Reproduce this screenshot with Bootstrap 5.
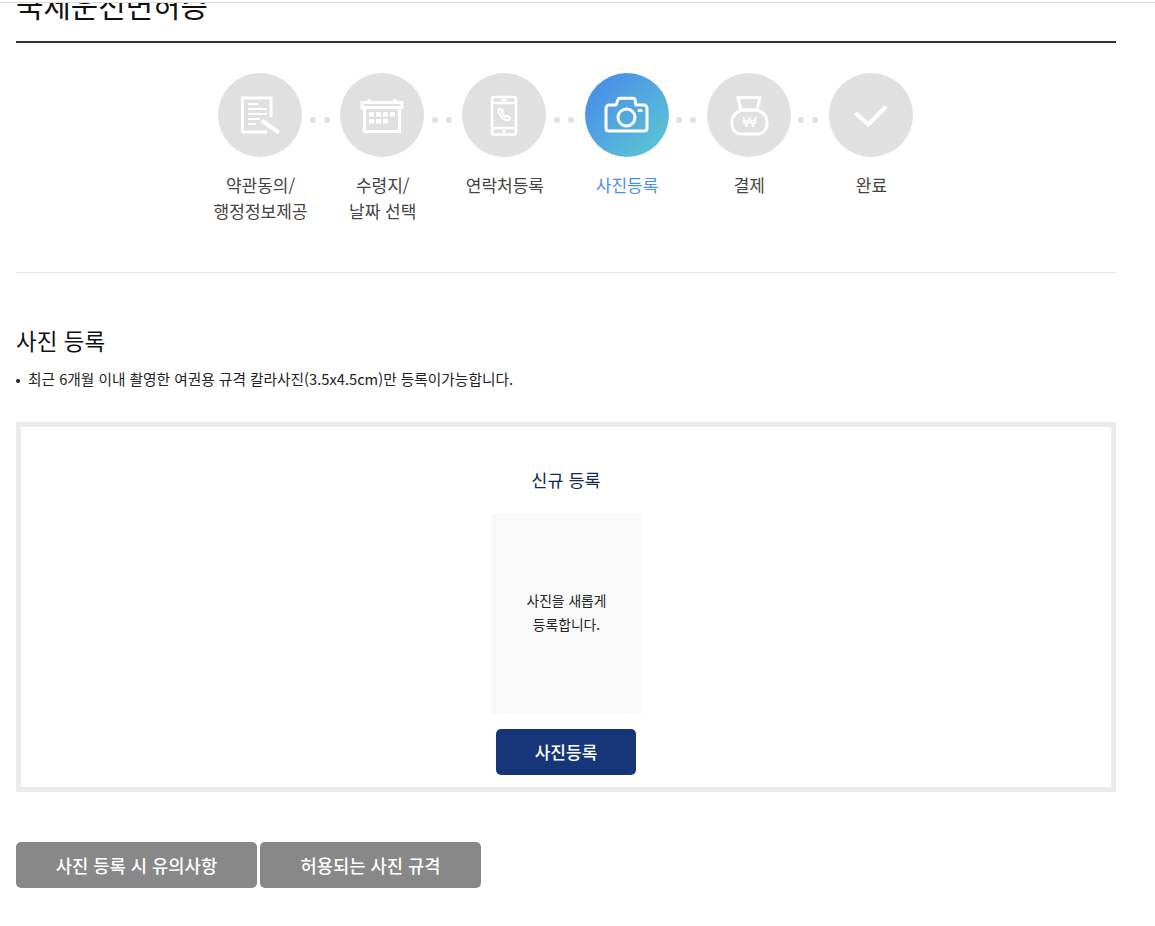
<!DOCTYPE html>
<html lang="ko">
<head>
<meta charset="utf-8">
<title>국제운전면허증</title>
<link href="https://cdn.jsdelivr.net/npm/bootstrap@5.3.0/dist/css/bootstrap.min.css" rel="stylesheet">
<style>
html,body{height:926px;overflow:hidden}
body{font-family:"Noto Sans CJK KR","Noto Sans",sans-serif;color:#222;background:#fff}
.topline{height:3px;border-bottom:1px solid #ddd}
.pagewrap{width:1100px;margin-left:16px}
.titlebar{height:40px;overflow:hidden;border-bottom:2px solid #333}
.titletext{font-size:29.800px;line-height:36px;margin:-17px 0 0;font-weight:400;color:#111;font-family:"Noto Sans CJK KR",sans-serif}
.stepicons{margin-top:30px;margin-left:-1px;justify-content:center}
.stepcircle{width:84px;height:84px;border-radius:50%;background:#e0e0e0;flex:none}
.stepcircle.on{background:linear-gradient(135deg,#4a90e8 15%,#5cc4d4 90%)}
.stepcircle svg{display:block}
.stepdots{width:38.2px;flex:none;justify-content:center;gap:8px;padding-top:44px;padding-right:2.800px}
.stepdots i{width:6px;height:6px;border-radius:50%;background:#e0e0e0;display:block}
.steplabels{justify-content:center;margin-top:15px;height:101px;border-bottom:1px solid #e6e6e6}
.steplabel{width:122.2px;text-align:center;font-size:17px;line-height:26px;color:#444;flex:none}
.steplabel.on{color:#4a90e8}
.sectiontitle{font-size:22.500px;line-height:32px;margin:51px 0 0;font-weight:400;color:#111}
.notice{font-size:14.700px;line-height:20px;margin:13px 0 0;padding-left:12px;color:#222;list-style:none}
.notice li::before{content:"";display:inline-block;width:4px;height:4px;border-radius:50%;background:#222;margin-left:-12px;margin-right:8px;vertical-align:middle}
.photopanel{margin-top:33px;height:370px;border:5px solid #ebebeb;padding-top:39px}
.newtitle{font-size:17.500px;line-height:28px;margin:0 0 20px;font-weight:400;color:#0f2a50}
.photobox{width:150px;height:200px;background:#f9f9f9;font-size:13.800px;line-height:24px;color:#222;padding:0 0 4px 1px}
.btnnavy{width:140px;height:46px;margin-top:15px;background:#17367a;color:#fff;border:0;border-radius:5px;font-size:17px;font-weight:500;padding:0}
.btnnavy:hover{background:#17367a;color:#fff}
.btnrow{margin-top:50px;gap:3px}
.btngrey{height:46px;background:#888;color:#fff;border:0;border-radius:5px;font-size:17.700px;font-weight:500;padding:0}
.btngrey:hover{background:#888;color:#fff}
.w1{width:241px}.w2{width:221px}
</style>
</head>
<body>
<div class="topline"></div>
<div class="pagewrap">
  <div class="titlebar"><h1 class="titletext">국제운전면허증</h1></div>

  <div class="d-flex stepicons">
    <div class="stepcircle"><svg width="84" height="84" viewBox="0 0 84 84" fill="none" stroke="#fff" stroke-width="3">
      <path d="M53 44V25H24.500v34H49"/><path d="M30 31h10M30 36h19M30 41h19M30 46h12M30 51h8" stroke-width="2.200"/><path d="M43.500 47.500 61 59.500" stroke-width="4"/></svg></div>
    <div class="d-flex stepdots"><i></i><i></i></div>
    <div class="stepcircle"><svg width="84" height="84" viewBox="0 0 84 84" fill="none" stroke="#fff" stroke-width="3">
      <path d="M24.500 34v24.500h35V34"/><path d="M22 29.500h40v5H22z" stroke-width="2.800"/><path d="M29 26v3M55 26v3" stroke-width="3"/>
      <g fill="#fff" stroke="none"><rect x="29" y="39" width="5" height="4.500"/><rect x="36" y="39" width="5" height="4.500"/><rect x="43" y="39" width="5" height="4.500"/><rect x="50" y="39" width="5" height="4.500"/><rect x="29" y="46" width="5" height="4.500"/><rect x="36" y="46" width="5" height="4.500"/><rect x="43" y="46" width="5" height="4.500"/></g></svg></div>
    <div class="d-flex stepdots"><i></i><i></i></div>
    <div class="stepcircle"><svg width="84" height="84" viewBox="0 0 84 84" fill="none" stroke="#fff" stroke-width="2.600">
      <rect x="30" y="24" width="24" height="37.500" rx="2"/><path d="M30 30h24M30 55h24"/><path d="M39 27h6" stroke-width="1.600"/><circle cx="42" cy="58.300" r="1.500" fill="#fff" stroke="none"/>
      <path d="M37.500 35.500c-1.500 1-1.200 3.500.3 6s4.500 5 7 5.500c1.500.3 3-.5 3.400-1.700l-3.200-2.600-1.700 1.200c-1.300-.7-3-3-3.500-4.500l1.500-1.400z" stroke-width="2"/></svg></div>
    <div class="d-flex stepdots"><i></i><i></i></div>
    <div class="stepcircle on"><svg width="84" height="84" viewBox="0 0 84 84" fill="none" stroke="#fff" stroke-width="3">
      <path d="M24 32h7l2-5.500c.3-.8 1-1.200 2-1.200h13c1 0 1.700.4 2 1.200l1 5.500h8c1.500 0 3 1.500 3 3v20c0 2-1 3-3 3H24c-2 0-3-1-3-3V35c0-1.500 1.500-3 3-3z" stroke-linejoin="round"/><circle cx="41.500" cy="44.500" r="8.500"/><rect x="52.500" y="36" width="5" height="3" rx="1.500" fill="#fff" stroke="none"/></svg></div>
    <div class="d-flex stepdots"><i></i><i></i></div>
    <div class="stepcircle"><svg width="84" height="84" viewBox="0 0 84 84" fill="none" stroke="#fff" stroke-width="3">
      <path d="M31 24.500h22l-3 12.500H34z"/><path d="M35 37h15c6 2 10 6 10 12v2c0 6-4 10-10 10H35c-6 0-10-4-10-10v-2c0-6 4-10 10-12z"/>
      <text x="42.500" y="54" text-anchor="middle" font-size="15" font-weight="400" fill="#fff" stroke="none" font-family="'Liberation Sans','Noto Sans CJK KR',sans-serif">₩</text></svg></div>
    <div class="d-flex stepdots"><i></i><i></i></div>
    <div class="stepcircle"><svg width="84" height="84" viewBox="0 0 84 84" fill="none" stroke="#fff" stroke-width="4.200"><path d="M26.500 40 39.500 51.500 57 33.500"/></svg></div>
  </div>

  <div class="d-flex steplabels">
    <div class="steplabel">약관동의/<br>행정정보제공</div>
    <div class="steplabel">수령지/<br>날짜 선택</div>
    <div class="steplabel">연락처등록</div>
    <div class="steplabel on">사진등록</div>
    <div class="steplabel">결제</div>
    <div class="steplabel">완료</div>
  </div>

  <h2 class="sectiontitle">사진 등록</h2>
  <ul class="notice"><li>최근 6개월 이내 촬영한 여권용 규격 칼라사진(3.5x4.5cm)만 등록이가능합니다.</li></ul>

  <div class="photopanel d-flex flex-column align-items-center">
    <h3 class="newtitle">신규 등록</h3>
    <div class="photobox d-flex align-items-center justify-content-center text-center">사진을 새롭게<br>등록합니다.</div>
    <button type="button" class="btn btnnavy">사진등록</button>
  </div>

  <div class="d-flex btnrow">
    <button type="button" class="btn btngrey w1">사진 등록 시 유의사항</button>
    <button type="button" class="btn btngrey w2">허용되는 사진 규격</button>
  </div>
</div>
</body>
</html>
